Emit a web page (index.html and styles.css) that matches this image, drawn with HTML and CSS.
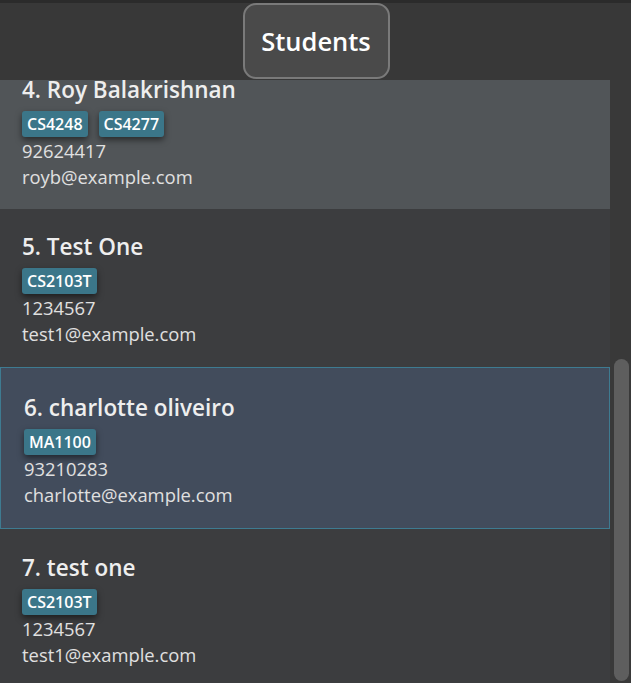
FILE: index.html
```html
<!DOCTYPE html>
<html>
<head>
<meta charset="utf-8">
<link rel="stylesheet" href="styles.css">
</head>
<body>
<div class="topstrip"></div>
<header class="header">
  <div class="title-btn">Students</div>
</header>
<div class="panel">
  <div class="viewport">
    <div class="list">
      <div class="card card-hover">
        <div class="name">4. Roy Balakrishnan</div>
        <div class="tags"><span class="tag">CS4248</span><span class="tag">CS4277</span></div>
        <div class="line">92624417</div>
        <div class="line">royb@example.com</div>
      </div>
      <div class="card">
        <div class="name">5. Test One</div>
        <div class="tags"><span class="tag">CS2103T</span></div>
        <div class="line">1234567</div>
        <div class="line">test1@example.com</div>
      </div>
      <div class="card card-selected">
        <div class="name">6. charlotte oliveiro</div>
        <div class="tags"><span class="tag">MA1100</span></div>
        <div class="line">93210283</div>
        <div class="line">charlotte@example.com</div>
      </div>
      <div class="card card-last">
        <div class="name">7. test one</div>
        <div class="tags"><span class="tag">CS2103T</span></div>
        <div class="line">1234567</div>
        <div class="line">test1@example.com</div>
      </div>
    </div>
  </div>
  <div class="scrollbar"><div class="thumb"></div></div>
</div>
</body>
</html>
```
FILE: styles.css
```css
html, body {
  margin: 0;
  padding: 0;
  background: #3c3d3f;
  font-family: "Open Sans", "Noto Sans", sans-serif;
  overflow: hidden;
}
.topstrip {
  height: 3px;
  background: #2b2b2b;
}
.header {
  height: 77px;
  background: #383838;
  display: flex;
  justify-content: center;
  align-items: flex-start;
}
.title-btn {
  box-sizing: border-box;
  width: 147px;
  height: 76px;
  margin-left: 1px;
  border: 2px solid #7a7a7a;
  border-radius: 13px;
  background: #4a4a4a;
  color: #ffffff;
  font-size: 25.5px;
  font-weight: 600;
  display: flex;
  align-items: center;
  justify-content: center;
}
.panel {
  display: flex;
  height: 603px;
}
.viewport {
  width: 610px;
  overflow: hidden;
}
.list {
  margin-top: -28px;
}
.card {
  box-sizing: border-box;
  height: 158px;
  padding: 24px 22px 20px;
  color: #e6e6e6;
}
.card-hover {
  height: 157px;
  background: #515558;
}
.card-selected {
  height: 162px;
  padding: 26px 23px 19px;
  background: #424c5c;
  border: 1px solid #3e7b91;
}
.card-last {
  padding-top: 25px;
}
.name {
  height: 20px;
  line-height: 20px;
  padding: 4px 0;
  font-size: 22.5px;
  font-weight: 600;
  color: #eeeeee;
  white-space: nowrap;
}
.tags {
  display: flex;
  gap: 11px;
  margin-top: 7px;
  height: 26px;
}
.tag {
  display: flex;
  align-items: center;
  height: 26px;
  padding: 0 5px;
  border-radius: 3px;
  background: #3b7689;
  color: #ffffff;
  font-size: 16px;
  font-weight: 600;
  box-shadow: 0 3px 6px rgba(0, 0, 0, 0.5);
}
.tags + .line {
  margin-top: 1px;
}
.line {
  height: 26px;
  line-height: 26px;
  font-size: 18.4px;
  color: #e0e0e0;
}
.scrollbar {
  width: 21px;
  background: #393939;
  position: relative;
}
.thumb {
  position: absolute;
  left: 4px;
  top: 279px;
  width: 15px;
  height: 322px;
  border-radius: 8px;
  background: #5e5e5e;
}
```
